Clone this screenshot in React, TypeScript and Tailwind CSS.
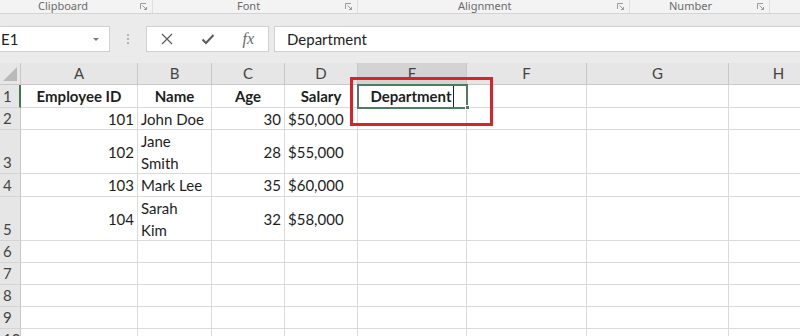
import React from "react";

const cols = [
  { key: "", w: 21 },
  { key: "A", w: 117 },
  { key: "B", w: 74 },
  { key: "C", w: 73 },
  { key: "D", w: 73 },
  { key: "E", w: 109 },
  { key: "F", w: 120 },
  { key: "G", w: 142 },
  { key: "H", w: 100 },
];

type Cell = { v: string; align?: "l" | "r" | "c"; bold?: boolean };

// row heights follow the sheet: wrapped name cells make rows 3 and 5 double height
const rows: { h: number; cells: Cell[] }[] = [
  {
    h: 23,
    cells: [
      { v: "Employee ID", align: "c", bold: true },
      { v: "Name", align: "c", bold: true },
      { v: "Age", align: "c", bold: true },
      { v: "Salary", align: "c", bold: true },
      { v: "Department", align: "c", bold: true },
    ],
  },
  { h: 22, cells: [{ v: "101", align: "r" }, { v: "John Doe" }, { v: "30", align: "r" }, { v: "$50,000" }] },
  { h: 44, cells: [{ v: "102", align: "r" }, { v: "Jane\nSmith" }, { v: "28", align: "r" }, { v: "$55,000" }] },
  { h: 23, cells: [{ v: "103", align: "r" }, { v: "Mark Lee" }, { v: "35", align: "r" }, { v: "$60,000" }] },
  { h: 44, cells: [{ v: "104", align: "r" }, { v: "Sarah\nKim" }, { v: "32", align: "r" }, { v: "$58,000" }] },
  { h: 22, cells: [] },
  { h: 22, cells: [] },
  { h: 22, cells: [] },
  { h: 22, cells: [] },
  { h: 22, cells: [] },
];

function Launcher() {
  return (
    <svg width="8" height="8" viewBox="0 0 8 8" className="mt-[3px]">
      <path d="M0.5 6 V0.5 H6" fill="none" stroke="#9a9a9a" strokeWidth="1" />
      <path d="M2.5 2.5 L6.5 6.5 M4 6.5 H6.5 V4" fill="none" stroke="#9a9a9a" strokeWidth="1" />
    </svg>
  );
}

function Group({ label, w, pl, last }: { label: string; w: number; pl: number; last?: boolean }) {
  return (
    <div
      className={"flex h-full shrink-0 " + (last ? "" : "border-r border-[#dedede]")}
      style={{ width: w, paddingLeft: pl }}
    >
      <span className="text-[11px] leading-[12px] text-[#6b6b6b]">{label}</span>
      <div className="ml-auto pr-[4px]">
        <Launcher />
      </div>
    </div>
  );
}

export default function App() {
  return (
    <div className="relative h-[336px] w-[800px] overflow-hidden bg-white font-['Lato',sans-serif] text-[15px] text-[#1e1e1e]">
      {/* ribbon group labels */}
      <div className="flex h-[14px] border-b border-[#d4d4d4] bg-[#f3f3f3] font-['Noto_Sans',sans-serif]">
        <Group label="Clipboard" w={153} pl={38} />
        <Group label="Font" w={205} pl={84} />
        <Group label="Alignment" w={272} pl={100} />
        <Group label="Number" w={140} pl={39} />
        <div className="flex-1" />
      </div>

      {/* formula bar */}
      <div className="flex h-[49px] flex-col bg-[#ebebeb]">
        <div className="mt-[12px] flex h-[26px]">
          <div className="flex w-[110px] items-center justify-between border-y border-r border-[#d0d0d0] bg-white pl-[1px] pr-[10px] text-[15px] text-[#222]">
            <span>E1</span>
            <span className="h-0 w-0 border-x-[3px] border-t-[3px] border-x-transparent border-t-[#7a7a7a]" />
          </div>
          <div className="flex w-[36px] flex-col items-center justify-center gap-[2px]">
            <span className="h-[2px] w-[2px] bg-[#b5b5b5]" />
            <span className="h-[2px] w-[2px] bg-[#b5b5b5]" />
            <span className="h-[2px] w-[2px] bg-[#b5b5b5]" />
          </div>
          <div className="flex w-[123px] items-center justify-around border border-[#d0d0d0] bg-white">
            <svg width="12" height="12" viewBox="0 0 12 12">
              <path d="M1 1 L11 11 M11 1 L1 11" stroke="#5a5a5a" strokeWidth="1.2" fill="none" />
            </svg>
            <svg width="14" height="12" viewBox="0 0 14 12">
              <path d="M1.5 6.5 L5 10 L12.5 2" stroke="#5a5a5a" strokeWidth="2" fill="none" />
            </svg>
            <span className="font-['Liberation_Serif',serif] text-[16px] italic leading-none text-[#6a6a6a]">fx</span>
          </div>
          <div className="ml-[5px] flex flex-1 items-center border-y border-l border-[#d0d0d0] bg-white pl-[12px] text-[15px] text-[#222]">
            Department
          </div>
        </div>
      </div>

      {/* sheet */}
      <div className="flex flex-col">
        <div className="flex h-[22px]">
          {cols.map((c, i) =>
            i === 0 ? (
              <div
                key={i}
                className="relative shrink-0 border-r border-b border-[#c8c8c8] bg-[#e6e6e6]"
                style={{ width: c.w }}
              >
                <svg width="16" height="16" viewBox="0 0 16 16" className="absolute bottom-[2px] right-[2px]">
                  <path d="M15 1 L15 15 L1 15 Z" fill="#b9b9b9" />
                </svg>
              </div>
            ) : (
              <div
                key={i}
                className={
                  "flex shrink-0 items-center justify-center border-r border-b border-[#c8c8c8] text-[#444] " +
                  (c.key === "E" ? "bg-[#d3d3d3]" : "bg-[#e6e6e6]")
                }
                style={{ width: c.w }}
              >
                {c.key}
              </div>
            )
          )}
        </div>

        {rows.map((r, ri) => (
          <div key={ri} className="flex" style={{ height: r.h }}>
            <div
              className={
                "flex shrink-0 items-end border-b bg-[#e6e6e6] pl-[3px] leading-[22px] text-[#444] " +
                (ri === 0 ? "border-r-2 border-r-[#3f7a55] border-b-[#d4d4d4]" : "border-r border-r-[#c8c8c8] border-b-[#d4d4d4]")
              }
              style={{ width: cols[0].w }}
            >
              {ri + 1}
            </div>
            {cols.slice(1).map((c, ci) => {
              const cell = r.cells[ci];
              const isEdit = ri === 0 && ci === 4;
              return (
                <div
                  key={ci}
                  className={
                    "flex shrink-0 items-center overflow-hidden whitespace-pre-line border-r border-b border-[#dadada] px-[3px] leading-[22px] " +
                    (cell?.align === "r" ? "justify-end text-right " : cell?.align === "c" ? "justify-center text-center " : "justify-start ") +
                    (cell?.bold ? "font-bold" : "")
                  }
                  style={{ width: c.w }}
                >
                  {cell && !isEdit ? <span>{cell.v}</span> : null}
                  {isEdit ? <span className="border-r border-[#222] pr-[1px]">{cell.v}</span> : null}
                </div>
              );
            })}
          </div>
        ))}
      </div>

      {/* active cell E1 */}
      <div className="absolute left-[357px] top-[84px] h-[25px] w-[111px] border-2 border-[#4b7d5e]" />
      <div className="absolute left-[465px] top-[105px] h-[5px] w-[5px] border border-white bg-[#4b7d5e]" />

      {/* red highlight */}
      <div className="absolute left-[350px] top-[77px] h-[49px] w-[143px] border-[3px] border-[#d8232a]" />
    </div>
  );
}
